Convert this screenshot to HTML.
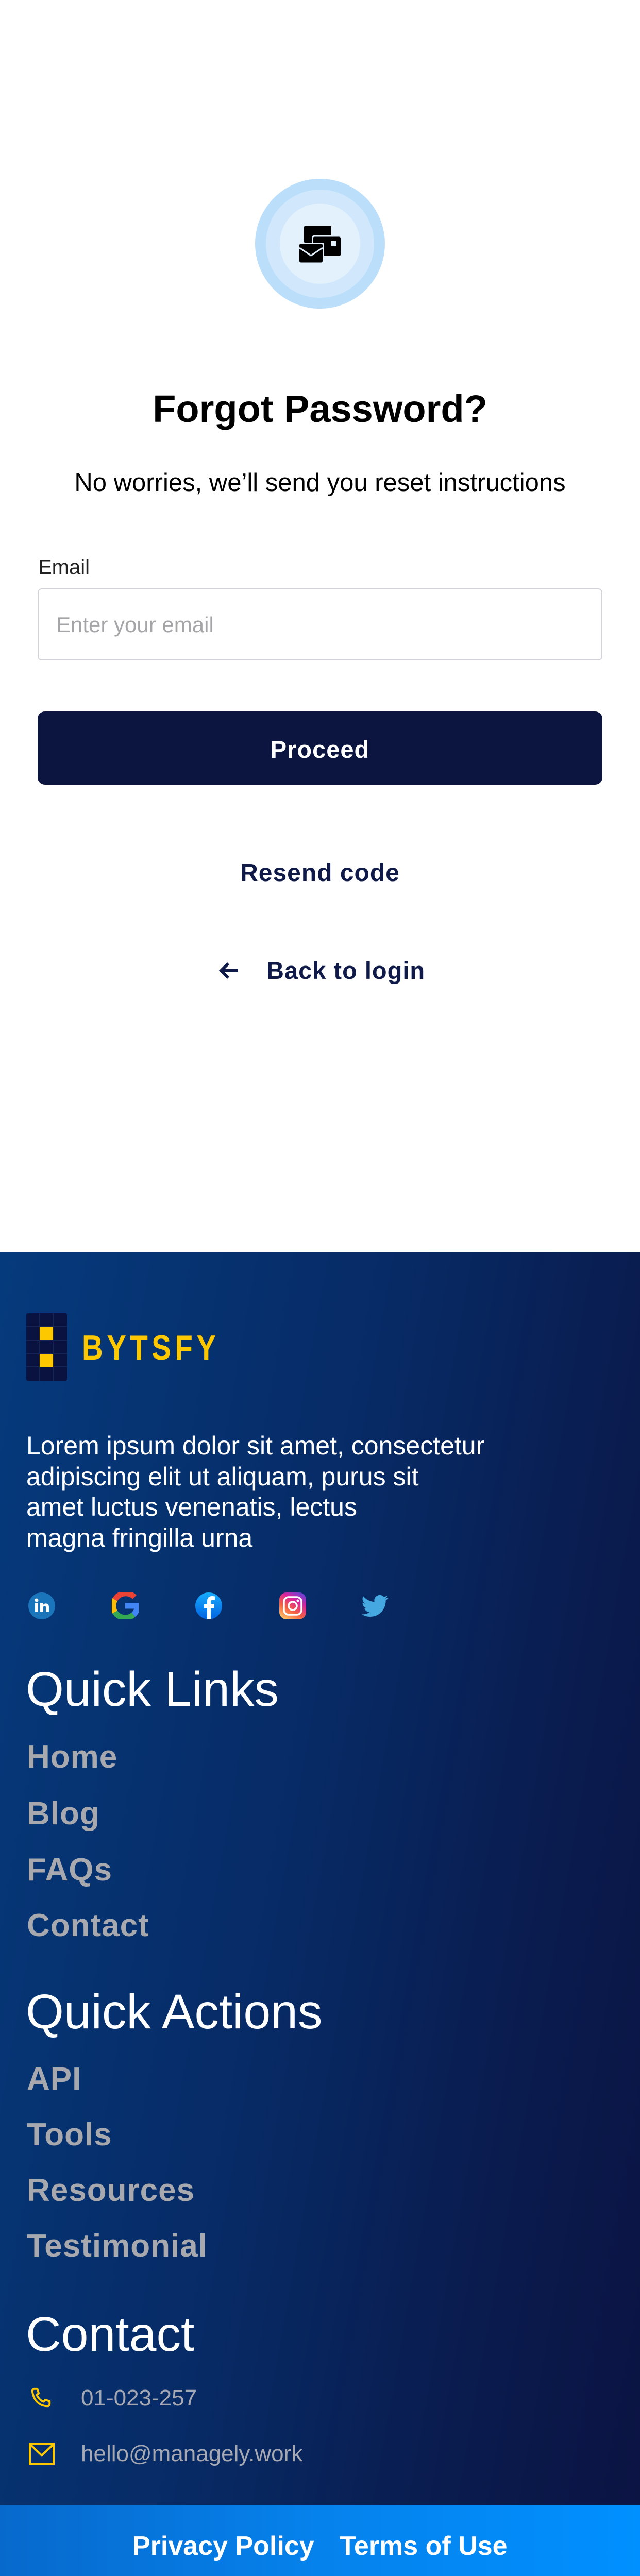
<!DOCTYPE html>
<html><head><meta charset="utf-8">
<style>
*{margin:0;padding:0;box-sizing:border-box}
html,body{width:1242px;height:5127px;background:#fff;font-family:"Liberation Sans",sans-serif;overflow:hidden}
.a{position:absolute;white-space:nowrap}
.c{left:0;width:1242px;text-align:center}
#foot{position:absolute;left:0;top:2430px;width:1242px;height:2432px;background:linear-gradient(100deg,#053a7c 0%,#072b66 45%,#0a1a4c 80%,#0b1443 100%)}
#band{position:absolute;left:0;top:4862px;width:1242px;height:265px;background:linear-gradient(90deg,#0769cc 0%,#0682ec 50%,#0090ff 100%)}
.h{color:#fff;font-size:95px;left:50px;line-height:106px}
.it{color:#a7a9ae;font-weight:bold;font-size:62px;left:52px;line-height:72px;letter-spacing:1px}
</style></head><body>
<svg class="a" style="left:495px;top:347px" width="252" height="252" viewBox="0 0 252 252">
<circle cx="126" cy="126" r="126" fill="#bbdefb"/>
<circle cx="126" cy="126" r="105" fill="#d1e8fc"/>
<circle cx="126" cy="126" r="78" fill="#e3f1fd"/>
<g transform="translate(-495,-347)">
<rect x="590" y="438" width="53" height="34" rx="3" fill="#000"/>
<rect x="605" y="457" width="58" height="42" rx="4" fill="#e3f1fd"/>
<rect x="607.5" y="459.5" width="53.5" height="37.5" rx="3" fill="#000"/>
<rect x="643" y="468" width="10" height="10" fill="#e3f1fd"/>
<rect x="579" y="471" width="50" height="41" rx="4" fill="#e3f1fd"/>
<rect x="581" y="473" width="45" height="36.5" rx="3" fill="#000"/>
<path d="M581 481 L603.5 496 L626 481" stroke="#e3f1fd" stroke-width="3" fill="none"/>
</g>
</svg>
<div class="a c" style="top:752px;font-size:74px;font-weight:bold;line-height:84px;color:#000">Forgot Password?</div>
<div class="a c" style="top:907px;font-size:49px;line-height:60px;color:#000">No worries, we’ll send you reset instructions</div>
<div class="a" style="left:74px;top:1078px;font-size:40px;line-height:46px;color:#222">Email</div>
<div class="a" style="left:73px;top:1142px;width:1096px;height:140px;border:2px solid #d2d2d8;border-radius:8px"></div>
<div class="a" style="left:109px;top:1188px;font-size:42px;line-height:50px;color:#a5a5a8">Enter your email</div>
<div class="a" style="left:73px;top:1381px;width:1096px;height:142px;background:#0c1540;border-radius:14px"></div>
<div class="a c" style="top:1426px;font-size:47px;font-weight:bold;line-height:58px;color:#fff;letter-spacing:1px">Proceed</div>
<div class="a c" style="top:1666px;font-size:48px;font-weight:bold;line-height:58px;color:#101a48;letter-spacing:1px">Resend code</div>
<svg class="a" style="left:424px;top:1866px" width="40" height="36" viewBox="0 0 40 36"><path d="M38 18H5M19 4L5 18L19 32" stroke="#101a48" stroke-width="6" fill="none"/></svg>
<div class="a" style="left:517px;top:1855px;font-size:47px;font-weight:bold;line-height:58px;color:#101a48;letter-spacing:1px">Back to login</div>

<div id="foot"></div>
<svg class="a" style="left:51px;top:2549px" width="79" height="131" viewBox="0 0 79 131">
<rect width="79" height="131" rx="3" fill="#0a1240"/>
<g stroke="#1a2a5e" stroke-width="1.5"><path d="M26 0V131M52 0V131M0 26H79M0 52H79M0 78H79M0 104H79"/></g>
<rect x="26" y="27" width="26" height="25" fill="#fdc800"/>
<rect x="26" y="79" width="26" height="25" fill="#fdc800"/>
</svg>
<div class="a" style="left:159px;top:2581px;font-size:68px;font-weight:bold;line-height:70px;color:#fdc800;letter-spacing:9px;transform:scaleX(0.83);transform-origin:left">BYTSFY</div>
<div class="a" style="left:51px;top:2777px;font-size:50px;line-height:59.5px;color:#fff;white-space:normal;width:1100px">Lorem ipsum dolor sit amet, consectetur<br>adipiscing elit ut aliquam, purus sit<br>amet luctus venenatis, lectus<br>magna fringilla urna</div>

<svg class="a" style="left:55px;top:3091px" width="52" height="52" viewBox="0 0 52 52"><circle cx="26" cy="26" r="26" fill="#1a75bb"/><rect x="13" y="21" width="6" height="17" fill="#fff"/><circle cx="16" cy="15" r="3.5" fill="#fff"/><path d="M23 21h6v3c2-4 11-4 11 4v10h-6v-9c0-4-5-4-5 0v9h-6z" fill="#fff"/></svg>
<svg class="a" style="left:217px;top:3091px" width="52" height="52" viewBox="0 0 52 52">
<path d="M44 9A24 24 0 0 0 6 14" stroke="#ea4335" stroke-width="11" fill="none"/>
<path d="M6 14A24 24 0 0 0 6 38" stroke="#fbbc05" stroke-width="11" fill="none"/>
<path d="M6 38A24 24 0 0 0 42 43" stroke="#34a853" stroke-width="11" fill="none"/>
<path d="M42 43A24 24 0 0 0 50 26H26" stroke="#4285f4" stroke-width="11" fill="none"/>
</svg>
<svg class="a" style="left:379px;top:3091px" width="52" height="52" viewBox="0 0 52 52"><defs><linearGradient id="fb" x1="0" y1="0" x2="0" y2="1"><stop offset="0" stop-color="#18acfe"/><stop offset="1" stop-color="#0163e0"/></linearGradient></defs><circle cx="26" cy="26" r="26" fill="url(#fb)"/><path d="M23 52V31h-6v-8h6v-6c0-7 4-10 10-10l5 .5v7h-4c-3 0-4 1.5-4 4v4.5h7l-1 8h-6v21z" fill="#fff"/></svg>
<svg class="a" style="left:542px;top:3091px" width="52" height="52" viewBox="0 0 52 52"><defs><linearGradient id="ig" x1="0.2" y1="1" x2="0.8" y2="0"><stop offset="0" stop-color="#fdc468"/><stop offset="0.35" stop-color="#f56040"/><stop offset="0.7" stop-color="#d6249f"/><stop offset="1" stop-color="#6a44d8"/></linearGradient></defs><rect width="52" height="52" rx="14" fill="url(#ig)"/><rect x="9" y="9" width="34" height="34" rx="9" stroke="#fff" stroke-width="3.5" fill="none"/><circle cx="26" cy="26" r="8" stroke="#fff" stroke-width="3.5" fill="none"/><circle cx="36" cy="16" r="2.5" fill="#fff"/></svg>
<svg class="a" style="left:700px;top:3091px" width="56" height="52" viewBox="0 0 24 24"><path fill="#45a8e0" d="M23.6 4.6c-.9.4-1.8.6-2.8.8 1-.6 1.8-1.6 2.1-2.7-1 .6-2 1-3.1 1.2a4.9 4.9 0 0 0-8.4 4.5C7.4 8.2 3.8 6.3 1.4 3.3a4.9 4.9 0 0 0 1.5 6.6c-.8 0-1.6-.3-2.2-.6 0 2.4 1.7 4.4 3.9 4.8-.7.2-1.5.2-2.2.1.6 2 2.4 3.4 4.6 3.4A9.9 9.9 0 0 1 0 19.5 14 14 0 0 0 7.5 21.7c9.1 0 14-7.5 14-14v-.6c1-.7 1.8-1.6 2.5-2.5z"/></svg>

<div class="a h" style="top:3226px">Quick Links</div>
<div class="a it" style="top:3375px">Home</div>
<div class="a it" style="top:3485px">Blog</div>
<div class="a it" style="top:3594px">FAQs</div>
<div class="a it" style="top:3702px">Contact</div>
<div class="a h" style="top:3852px">Quick Actions</div>
<div class="a it" style="top:4000px">API</div>
<div class="a it" style="top:4108px">Tools</div>
<div class="a it" style="top:4216px">Resources</div>
<div class="a it" style="top:4324px">Testimonial</div>
<div class="a h" style="top:4478px">Contact</div>
<svg class="a" style="left:56px;top:4632px" width="48" height="46" viewBox="0 0 24 24"><path d="M5 2.5l3 0 1.5 4.5-2 1.5c1 3 4 6 7 7l1.5-2 4.5 1.5v3c0 1-1 2-2 2C10 20 4 14 3 4.5c0-1 1-2 2-2z" stroke="#fdc800" stroke-width="2" fill="none" stroke-linejoin="round"/></svg>
<div class="a" style="left:157px;top:4630px;font-size:44px;line-height:50px;color:#a6a9b3">01-023-257</div>
<svg class="a" style="left:56px;top:4741px" width="50" height="44" viewBox="0 0 50 44"><rect x="2" y="2" width="46" height="40" stroke="#fdc800" stroke-width="4" fill="none"/><path d="M3 4L25 25L47 4" stroke="#fdc800" stroke-width="4" fill="none"/></svg>
<div class="a" style="left:157px;top:4738px;font-size:44px;line-height:50px;color:#a6a9b3">hello@managely.work</div>

<div id="band"></div>
<div class="a" style="left:257px;top:4912px;font-size:52px;font-weight:bold;line-height:60px;color:#fff">Privacy Policy</div>
<div class="a" style="left:659px;top:4912px;font-size:52px;font-weight:bold;line-height:60px;color:#fff">Terms of Use</div>
<div class="a" style="left:51px;top:5021px;font-size:49px;font-weight:bold;line-height:60px;color:#fff">Copyright © 2022 <span style="color:#fdc800">Bytsfy</span> - All rights reserved.</div>
</body></html>
